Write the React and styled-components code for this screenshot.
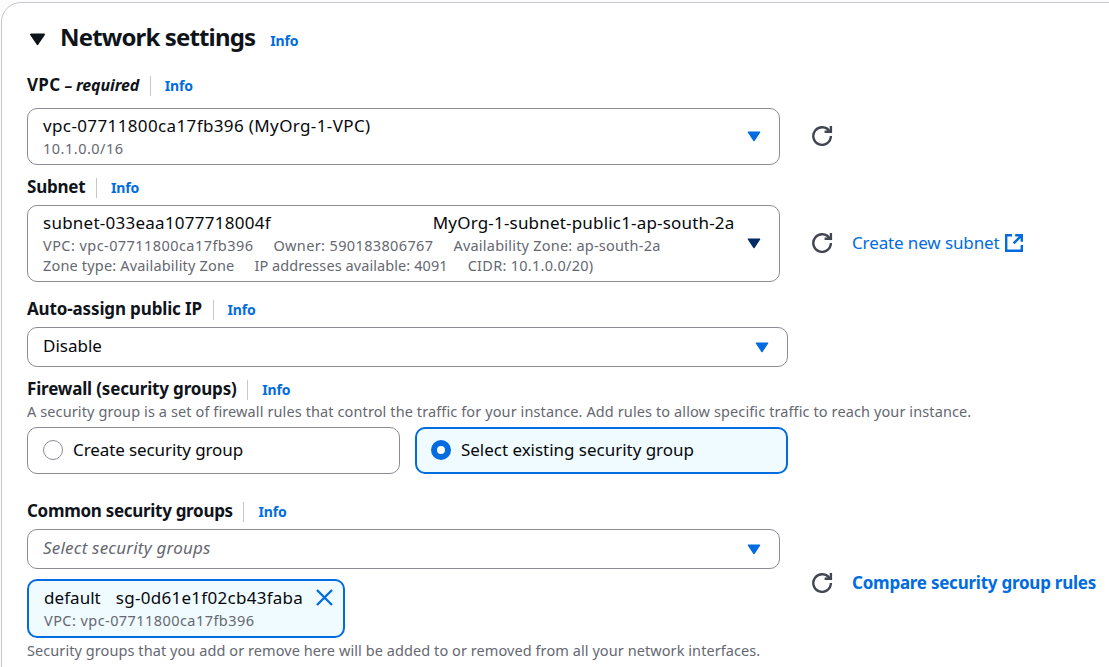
import React from "react";
import styled, { createGlobalStyle } from "styled-components";

const color = {
  text: "#0f141a",
  value: "#06080c",
  muted: "#656871",
  link: "#006ce0",
  linkDark: "#002b66",
  border: "#8c8c94",
  divider: "#c6c6cd",
  icon: "#424650",
  selected: "#f0fbff",
};

const GlobalStyle = createGlobalStyle`
  * { box-sizing: border-box; }
  html, body { margin: 0; overflow: hidden; }
  body {
    background: #fcfcfc;
    color: ${color.value};
    font-family: "Noto Sans", "Open Sans", sans-serif;
    font-size: 17px;
    line-height: 22px;
    white-space: nowrap;
  }
`;

const Viewport = styled.div`
  height: 667px;
  padding: 2px 0 0 1px;
  overflow: hidden;
`;

const Card = styled.section`
  width: 1140px;
  height: 700px;
  padding: 18px 0 0 25px;
  border: 1px solid ${color.divider};
  border-radius: 20px;
  background: #fff;
`;

const Text = styled.span`
  letter-spacing: ${(p) => p.$track || 0}px;
`;

const Small = styled(Text)`
  font-size: 14.5px;
  line-height: 20px;
  color: ${color.muted};
`;

const Header = styled.header`
  display: flex;
  align-items: baseline;
  height: 32px;
  margin-bottom: 21px;
  color: ${color.text};
  svg { margin: 0 14px 2px 2px; }
`;

const Title = styled.h2`
  margin: 0 15px 0 0;
  font-size: 24px;
  line-height: 32px;
  font-weight: 700;
  letter-spacing: -0.853px;
`;

const InfoLink = styled.a`
  color: ${color.link};
  font-size: 14px;
  font-weight: 700;
  letter-spacing: -0.15px;
`;

const LabelRow = styled.div`
  display: flex;
  align-items: baseline;
  height: 24px;
  margin: ${(p) => p.$top || 0}px 0 ${(p) => p.$bottom ?? 5}px;
  color: ${color.text};
  font-weight: 700;
`;

const Divider = styled.i`
  align-self: center;
  width: 1px;
  height: 20px;
  margin: 0 14px 0 10.6px;
  background: ${color.divider};
`;

const Required = styled.em`
  margin-left: 4px;
  font-size: 16px;
  letter-spacing: -0.13px;
`;

const FieldRow = styled.div`
  display: flex;
  align-items: center;
`;

const Field = styled.div`
  display: flex;
  align-items: center;
  justify-content: space-between;
  width: ${(p) => (p.$wide ? 761 : 753)}px;
  height: ${(p) => p.$height}px;
  padding: 0 18px 0 15px;
  border: 1px solid ${color.border};
  border-radius: 10px;
`;

const Lines = styled.div`
  display: flex;
  flex-direction: column;
  gap: ${(p) => p.$gap || 0}px;
  margin-top: -1px;
`;

const SubnetName = styled.div`
  display: flex;
  justify-content: space-between;
  width: 691.5px;
  margin-bottom: 1px;
`;

const Details = styled.div`
  display: flex;
  gap: 20px;
  height: 20px;
`;

const Value = styled(Text)`
  margin-top: -2px;
`;

const Placeholder = styled(Value)`
  color: ${color.muted};
  font-style: italic;
`;

const Actions = styled.div`
  display: flex;
  align-items: center;
  margin: -2px 0 0 32px;
`;

const ActionLink = styled.a`
  display: flex;
  align-items: center;
  gap: 5px;
  margin-left: 19px;
  color: ${color.link};
  font-weight: ${(p) => (p.$bold ? 700 : 400)};
`;

const Description = styled(Small)`
  display: block;
  margin: ${(p) => p.$top || 0}px 0 6px;
`;

const Tiles = styled.div`
  display: flex;
  gap: 15px;
`;

const Tile = styled.label`
  display: flex;
  align-items: center;
  gap: 10px;
  width: 373px;
  height: 47px;
  padding: 0 0 2px ${(p) => (p.$checked ? 14 : 15)}px;
  border: ${(p) => (p.$checked ? `2px solid ${color.link}` : `1px solid ${color.border}`)};
  border-radius: 10px;
  background: ${(p) => (p.$checked ? color.selected : "#fff")};
`;

const Radio = styled.span`
  width: 20px;
  height: 20px;
  border: ${(p) => (p.$checked ? `6px solid ${color.link}` : `1px solid ${color.border}`)};
  border-radius: 50%;
  background: #fff;
`;

const GroupControl = styled.div`
  display: flex;
  flex-direction: column;
  gap: 10px;
`;

const Token = styled.div`
  display: flex;
  justify-content: space-between;
  width: 318px;
  height: 59px;
  padding: 7px 10px 0 15px;
  border: 2px solid ${color.link};
  border-radius: 10px;
  background: ${color.selected};
  > svg { margin-top: 1px; }
`;

const TokenName = styled.div`
  display: flex;
  gap: 15px;
  height: 22px;
`;

const Caret = ({ fill = color.link, width = 14, height = 11 }) => (
  <svg width={width} height={height} viewBox="0 0 14 11" fill={fill} stroke={fill} strokeWidth="1.4" strokeLinejoin="round">
    <path d="M1.4 1.2h11.2L7 9.6z" />
  </svg>
);

const Refresh = () => (
  <svg width="21" height="20" viewBox="0 0 21 20" fill="none" stroke={color.icon} strokeWidth="2.4">
    <path d="M18.9 10A8.8 8.8 0 1 1 17.6 5.4" />
    <path d="M18.9 0v5.8h-6.3" />
  </svg>
);

const External = () => (
  <svg width="19" height="18" viewBox="0 0 19 18" fill="none" stroke={color.link} strokeWidth="2.4">
    <path d="M7 1.2H1.2v15.6h15.6V11" />
    <path d="M10.2 1.2h6.6v6.6M16.8 1.2L8.6 9.4" />
  </svg>
);

const Close = () => (
  <svg width="17" height="17" viewBox="0 0 17 17" stroke={color.link} strokeWidth="2.3">
    <path d="M1 1l15 15M16 1L1 16" />
  </svg>
);

const Label = ({ children, track, top, bottom, extra }) => (
  <LabelRow $top={top} $bottom={bottom}>
    <Text $track={track}>{children}</Text>
    {extra}
    <Divider />
    <InfoLink>Info</InfoLink>
  </LabelRow>
);

export default function App() {
  return (
    <Viewport>
      <GlobalStyle />
      <Card>
        <Header>
          <Caret fill={color.text} width={17} height={13} />
          <Title>Network settings</Title>
          <InfoLink>Info</InfoLink>
        </Header>

        <Label track={0.3} bottom={10} extra={<Required>– required</Required>}>VPC</Label>
        <FieldRow>
          <Field $height={57}>
            <Lines $gap={1}>
              <Text $track={0.376}>vpc-07711800ca17fb396 (MyOrg-1-VPC)</Text>
              <Small $track={0.495}>10.1.0.0/16</Small>
            </Lines>
            <Caret />
          </Field>
          <Actions><Refresh /></Actions>
        </FieldRow>

        <Label track={-0.22} top={11}>Subnet</Label>
        <FieldRow>
          <Field $height={77}>
            <Lines>
              <SubnetName>
                <Text $track={0.25}>subnet-033eaa1077718004f</Text>
                <Text $track={0.184}>MyOrg-1-subnet-public1-ap-south-2a</Text>
              </SubnetName>
              <Details>
                <Small $track={0.436}>VPC: vpc-07711800ca17fb396</Small>
                <Small $track={0.37}>Owner: 590183806767</Small>
                <Small $track={0.22}>Availability Zone: ap-south-2a</Small>
              </Details>
              <Details>
                <Small $track={0.175}>Zone type: Availability Zone</Small>
                <Small $track={0.08}>IP addresses available: 4091</Small>
                <Small $track={0.28}>CIDR: 10.1.0.0/20)</Small>
              </Details>
            </Lines>
            <Caret fill={color.linkDark} />
          </Field>
          <Actions>
            <Refresh />
            <ActionLink>
              <Text $track={-0.121}>Create new subnet</Text>
              <External />
            </ActionLink>
          </Actions>
        </FieldRow>

        <Label track={-0.14} top={16}>Auto-assign public IP</Label>
        <Field $wide $height={40}>
          <Value>Disable</Value>
          <Caret />
        </Field>

        <Label track={-0.167} top={11} bottom={0}>Firewall (security groups)</Label>
        <Description $top={-1} $track={0.107}>
          A security group is a set of firewall rules that control the traffic for your instance. Add rules to allow specific traffic to reach your instance.
        </Description>
        <Tiles>
          <Tile>
            <Radio />
            <Text $track={-0.1}>Create security group</Text>
          </Tile>
          <Tile $checked>
            <Radio $checked />
            <Text $track={-0.026}>Select existing security group</Text>
          </Tile>
        </Tiles>

        <Label track={-0.3} top={26}>Common security groups</Label>
        <FieldRow>
          <GroupControl>
            <Field $height={40}>
              <Placeholder $track={0.202}>Select security groups</Placeholder>
              <Caret />
            </Field>
            <Token>
              <Lines $gap={1}>
                <TokenName>
                  <Text $track={0.05}>default</Text>
                  <Text $track={0.278}>sg-0d61e1f02cb43faba</Text>
                </TokenName>
                <Small $track={0.436}>VPC: vpc-07711800ca17fb396</Small>
              </Lines>
              <Close />
            </Token>
          </GroupControl>
          <Actions>
            <Refresh />
            <ActionLink $bold><Text $track={-0.243}>Compare security group rules</Text></ActionLink>
          </Actions>
        </FieldRow>
        <Description $top={2} $track={0.074}>
          Security groups that you add or remove here will be added to or removed from all your network interfaces.
        </Description>
      </Card>
    </Viewport>
  );
}
